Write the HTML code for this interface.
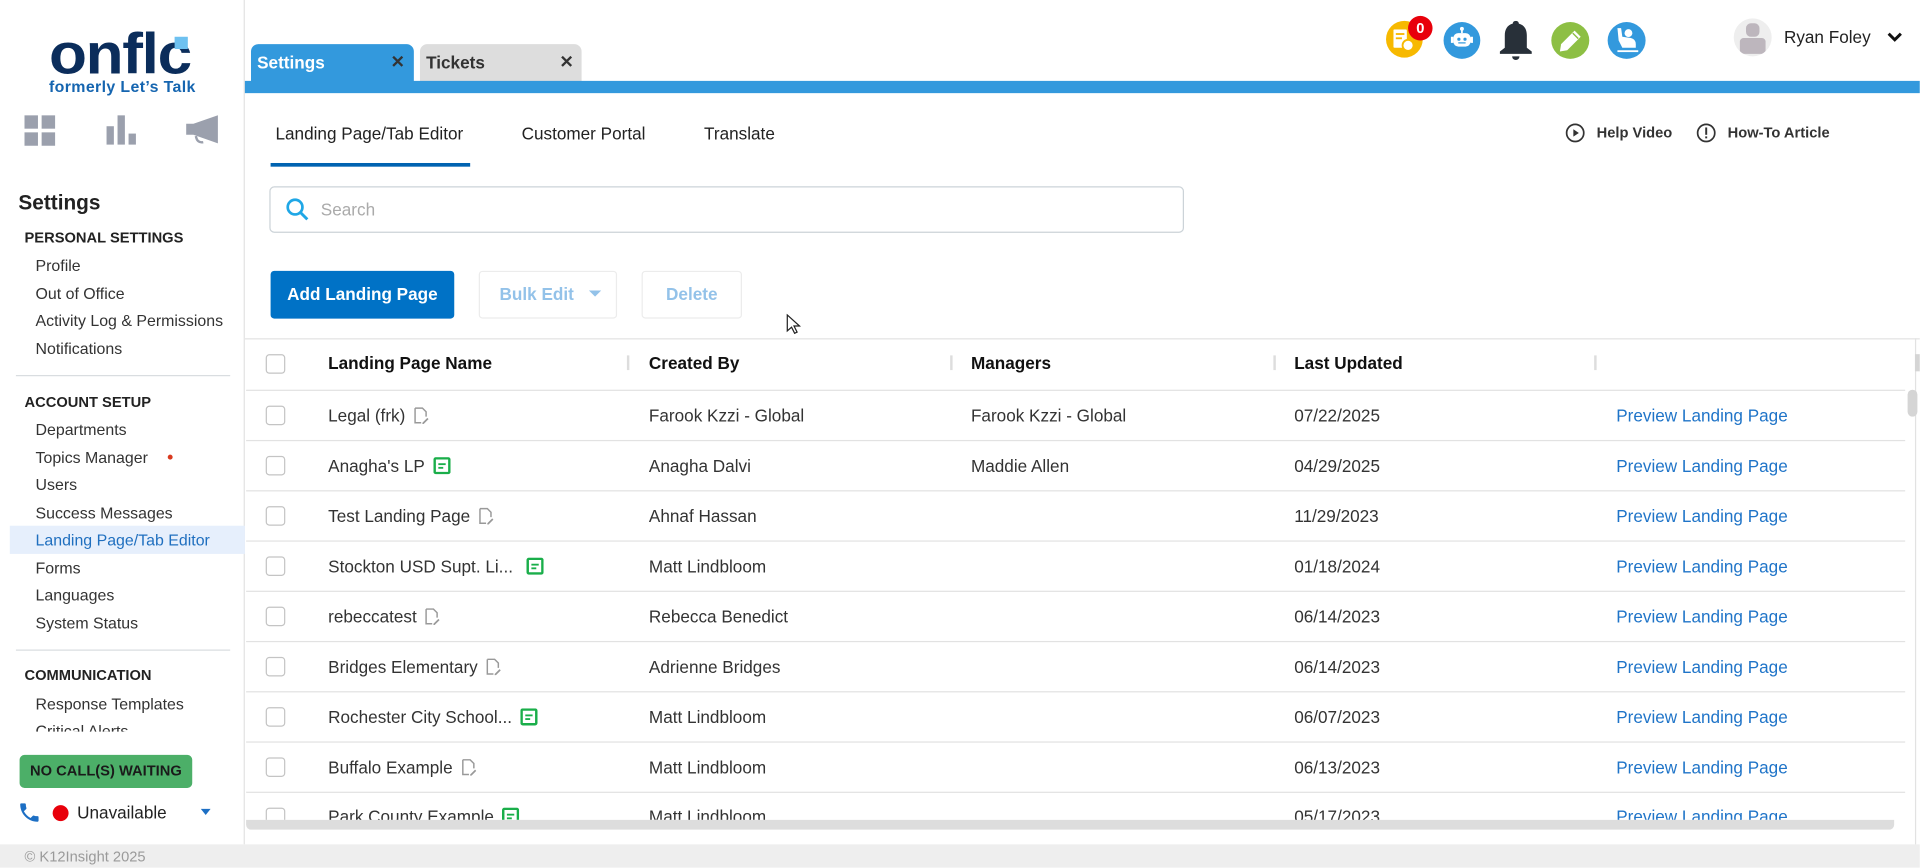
<!DOCTYPE html>
<html><head><meta charset="utf-8">
<style>
*{box-sizing:border-box;margin:0;padding:0}
html,body{width:1920px;height:868px;overflow:hidden;background:#fff}
#w{position:absolute;left:0;top:0;width:1568px;height:708px;overflow:hidden;transform:scale(1.2244,1.2255);transform-origin:0 0;font-family:"Liberation Sans",Arial,sans-serif;color:#2b2b2b}
.a{position:absolute}
.side{left:0;top:0;width:200px;height:689px;border-right:1px solid #e3e3e3;background:#fff}
.it{position:absolute;left:29px;font-size:13px;color:#333;white-space:nowrap}
.hd{position:absolute;left:20px;font-size:12px;font-weight:bold;color:#222}
.hr{position:absolute;left:13px;width:175px;height:1px;background:#d9dde0}
.cb{position:absolute;left:217px;width:16px;height:16px;border:1px solid #c4c4c4;border-radius:3px;background:#fff}
.th{position:absolute;font-size:14px;font-weight:bold;color:#111;top:288px}
.sep{position:absolute;top:290px;width:2px;height:12px;background:#ddd}
.row{position:absolute;left:201px;width:1355px;height:1px;background:#e2e2e2}
.td{position:absolute;font-size:14px;color:#333;white-space:nowrap}
.pv{position:absolute;left:1320px;font-size:14px;color:#1f74c8;white-space:nowrap}
.ic{display:inline-block;vertical-align:-2px;margin-left:7px}
</style></head><body><div id="w">

<!-- sidebar -->
<div class="a side">
  <div class="a" style="left:40px;top:19px;font-size:47px;font-weight:bold;color:#0b2d5b;letter-spacing:-1px;line-height:50px;transform:scaleX(1.08);transform-origin:0 0">onfl<span style="position:relative">c<span style="position:absolute;right:2px;top:13px;width:10px;height:10px;background:#6ec1f0"></span></span></div>
  <div class="a" style="left:40px;top:63px;font-size:13px;font-weight:bold;color:#1565b0;white-space:nowrap;letter-spacing:0.3px">formerly Let’s Talk</div>
  <svg class="a" style="left:20px;top:94px" width="26" height="25"><g fill="#9ba0ad"><rect x="0" y="0" width="11" height="11"/><rect x="14" y="0" width="11" height="11"/><rect x="0" y="14" width="11" height="11"/><rect x="14" y="14" width="11" height="11"/></g></svg>
  <svg class="a" style="left:87px;top:94px" width="25" height="25"><g fill="#9ba0ad"><rect x="0" y="9" width="6" height="15"/><rect x="9" y="0" width="6" height="24"/><rect x="18" y="15" width="6" height="9"/></g></svg>
  <svg class="a" style="left:152px;top:93px" width="26" height="27"><path fill="#9ba0ad" d="M0 8h6L26 1v23L6 17H0z"/><path d="M8 18q1 6 6 5" stroke="#9ba0ad" stroke-width="2" fill="none"/></svg>

  <div class="a" style="left:15px;top:156px;font-size:17px;font-weight:bold;color:#222">Settings</div>
  <div class="hd" style="top:187px">PERSONAL SETTINGS</div>
  <div class="it" style="top:209px">Profile</div>
  <div class="it" style="top:232px">Out of Office</div>
  <div class="it" style="top:254px">Activity Log &amp; Permissions</div>
  <div class="it" style="top:277px">Notifications</div>
  <div class="hr" style="top:306px"></div>
  <div class="hd" style="top:321px">ACCOUNT SETUP</div>
  <div class="it" style="top:343px">Departments</div>
  <div class="it" style="top:366px">Topics Manager <span style="display:inline-block;width:4px;height:4px;border-radius:50%;background:#d93a1f;margin-left:13px;vertical-align:3px"></span></div>
  <div class="it" style="top:388px">Users</div>
  <div class="it" style="top:411px">Success Messages</div>
  <div class="a" style="left:8px;top:429px;width:192px;height:23px;background:#e6effc"></div>
  <div class="it" style="top:433px;color:#1f6fbf">Landing Page/Tab Editor</div>
  <div class="it" style="top:456px">Forms</div>
  <div class="it" style="top:478px">Languages</div>
  <div class="it" style="top:501px">System Status</div>
  <div class="hr" style="top:530px"></div>
  <div class="hd" style="top:544px">COMMUNICATION</div>
  <div class="it" style="top:567px">Response Templates</div>
  <div class="a" style="left:0;top:586px;width:199px;height:11px;overflow:hidden"><div class="it" style="top:3px">Critical Alerts</div></div>
  <div class="a" style="left:16px;top:616px;width:141px;height:27px;background:#4caf68;border-radius:4px;font-size:12px;font-weight:bold;color:#1a1a1a;text-align:center;line-height:27px">NO CALL(S) WAITING</div>
  <svg class="a" style="left:14px;top:653px" width="20" height="20" viewBox="0 0 24 24"><path fill="#1d6fc4" d="M6.6 10.8c1.4 2.8 3.8 5.1 6.6 6.6l2.2-2.2c.3-.3.7-.4 1-.2 1.1.4 2.3.6 3.6.6.6 0 1 .4 1 1V20c0 .6-.4 1-1 1C10.6 21 3 13.4 3 4c0-.6.4-1 1-1h3.5c.6 0 1 .4 1 1 0 1.3.2 2.5.6 3.6.1.3 0 .7-.2 1z"/></svg>
  <div class="a" style="left:43px;top:657px;width:13px;height:13px;border-radius:50%;background:#e8000b"></div>
  <div class="a" style="left:63px;top:655px;font-size:14px;color:#222">Unavailable</div>
  <div class="a" style="left:164px;top:660px;width:0;height:0;border-left:4px solid transparent;border-right:4px solid transparent;border-top:5px solid #1d6fc4"></div>
</div>

<!-- footer -->
<div class="a" style="left:0;top:689px;width:1568px;height:20px;background:#eeeeee"></div>
<div class="a" style="left:20px;top:692px;font-size:12px;color:#9a9a9a">© K12Insight 2025</div>

<!-- tabs -->
<div class="a" style="left:205px;top:36px;width:133px;height:31px;background:#3399dd;border-radius:6px 6px 0 0"></div>
<div class="a" style="left:210px;top:43px;font-size:14px;font-weight:bold;color:#fff">Settings</div>
<div class="a" style="left:319px;top:42px;font-size:14px;font-weight:bold;color:#333">✕</div>
<div class="a" style="left:343px;top:36px;width:132px;height:31px;background:#dddddd;border-radius:6px 6px 0 0"></div>
<div class="a" style="left:348px;top:43px;font-size:14px;font-weight:bold;color:#333">Tickets</div>
<div class="a" style="left:457px;top:42px;font-size:14px;font-weight:bold;color:#333">✕</div>
<div class="a" style="left:200px;top:66px;width:1368px;height:10px;background:#3399dd"></div>

<!-- top right icons -->
<div class="a" style="left:1132px;top:17px;width:30px;height:30px;border-radius:50%;background:#f7b900"></div>
<svg class="a" style="left:1138px;top:24px" width="18" height="18"><g fill="#fff"><rect x="0" y="0" width="11" height="15" rx="1"/></g><g fill="#f7b900"><rect x="2" y="3" width="7" height="1.5"/><rect x="2" y="6.5" width="5" height="1.5"/></g><circle cx="12" cy="13" r="4.5" fill="#fff" stroke="#f7b900" stroke-width="1.5"/></svg>
<div class="a" style="left:1150px;top:13px;width:20px;height:20px;border-radius:50%;background:#e8000b;color:#fff;font-size:12px;font-weight:bold;text-align:center;line-height:20px">0</div>
<div class="a" style="left:1179px;top:18px;width:30px;height:30px;border-radius:50%;background:#3399dd"></div>
<svg class="a" style="left:1184px;top:21px" width="20" height="24"><g fill="#fff"><circle cx="10" cy="2.5" r="1.6"/><rect x="9.3" y="3" width="1.4" height="3"/><rect x="3" y="6" width="14" height="11" rx="4"/><rect x="1" y="9" width="2" height="5"/><rect x="17" y="9" width="2" height="5"/></g><g fill="#3399dd"><circle cx="7.5" cy="11" r="1.3"/><circle cx="12.5" cy="11" r="1.3"/><rect x="7" y="13.5" width="6" height="1"/></g></svg>
<svg class="a" style="left:1224px;top:17px" width="28" height="33" viewBox="0 0 28 33"><path fill="#283039" d="M14 0c1.5 0 2.5 1 2.5 2.3C21 3.5 23 7 23 12v10l4 3v2H1v-2l4-3V12c0-5 2-8.5 6.5-9.7C11.5 1 12.5 0 14 0z"/><path fill="#283039" d="M11 29h6a3 3 0 0 1-6 0z"/></svg>
<div class="a" style="left:1267px;top:18px;width:31px;height:30px;border-radius:50%;background:#8dbf44"></div>
<svg class="a" style="left:1273px;top:24px" width="19" height="19"><path fill="#fff" d="M13 1l5 5-11 11-6 1 1-6z"/><path d="M11.5 3l4.5 4.5" stroke="#8dbf44" stroke-width="1.2"/></svg>
<div class="a" style="left:1313px;top:18px;width:31px;height:30px;border-radius:50%;background:#3399dd"></div>
<svg class="a" style="left:1318px;top:22px" width="22" height="22"><g fill="#fff"><circle cx="12" cy="5" r="3.2"/><path d="M3 1l3 0 1 7 7 1q4 1 4 5v3H7l-3-6z"/><rect x="3" y="19" width="17" height="1.5"/></g></svg>
<div class="a" style="left:1416px;top:15px;width:31px;height:31px;border-radius:50%;background:#eeeeee;overflow:hidden"><div class="a" style="left:10px;top:4px;width:11px;height:11px;border-radius:4px;background:#bdb6bd"></div><div class="a" style="left:5px;top:16px;width:21px;height:13px;border-radius:3px;background:#bdb6bd"></div></div>
<div class="a" style="left:1457px;top:22px;font-size:14px;color:#222">Ryan Foley</div>
<svg class="a" style="left:1541px;top:26px" width="13" height="9"><path d="M1.5 1.5l5 5 5-5" stroke="#111" stroke-width="2.4" fill="none"/></svg>

<!-- subtabs -->
<div class="a" style="left:225px;top:101px;font-size:14px;color:#222">Landing Page/Tab Editor</div>
<div class="a" style="left:221px;top:133px;width:163px;height:3px;background:#0063b1"></div>
<div class="a" style="left:426px;top:101px;font-size:14px;color:#222">Customer Portal</div>
<div class="a" style="left:575px;top:101px;font-size:14px;color:#222">Translate</div>
<svg class="a" style="left:1278px;top:100px" width="17" height="17"><circle cx="8.5" cy="8.5" r="7" stroke="#333" stroke-width="1.4" fill="none"/><path d="M7 5.5v6l4.5-3z" fill="#333"/></svg>
<div class="a" style="left:1304px;top:101px;font-size:12px;font-weight:bold;color:#333">Help Video</div>
<svg class="a" style="left:1385px;top:100px" width="17" height="17"><circle cx="8.5" cy="8.5" r="7" stroke="#333" stroke-width="1.4" fill="none"/><rect x="7.7" y="4" width="1.6" height="6" fill="#333"/><rect x="7.7" y="11.3" width="1.6" height="1.6" fill="#333"/></svg>
<div class="a" style="left:1411px;top:101px;font-size:12px;font-weight:bold;color:#333">How-To Article</div>

<!-- search -->
<div class="a" style="left:220px;top:152px;width:747px;height:38px;border:1px solid #ccd3d8;border-radius:4px"></div>
<svg class="a" style="left:233px;top:161px" width="20" height="20"><circle cx="8" cy="8" r="6" stroke="#1fa7e6" stroke-width="2.2" fill="none"/><path d="M12.5 12.5l5.5 5.5" stroke="#1fa7e6" stroke-width="2.4"/></svg>
<div class="a" style="left:262px;top:163px;font-size:14px;color:#aaa">Search</div>

<!-- buttons -->
<div class="a" style="left:221px;top:221px;width:150px;height:39px;background:#0072c6;border-radius:3px;color:#fff;font-size:14px;font-weight:bold;text-align:center;line-height:39px">Add Landing Page</div>
<div class="a" style="left:391px;top:221px;width:113px;height:39px;border:1px solid #ececec;border-radius:3px;color:#93c2e9;font-size:14px;font-weight:bold;line-height:37px;padding-left:16px">Bulk Edit <span style="display:inline-block;margin-left:8px;vertical-align:3px;border-left:5px solid transparent;border-right:5px solid transparent;border-top:5px solid #93c2e9"></span></div>
<div class="a" style="left:524px;top:221px;width:82px;height:39px;border:1px solid #ececec;border-radius:3px;color:#93c2e9;font-size:14px;font-weight:bold;text-align:center;line-height:37px">Delete</div>
<svg class="a" style="left:642px;top:256px" width="12" height="18"><path d="M1 1v13l3.5-3 2.5 5 2-1-2.5-5H11z" fill="#fff" stroke="#222" stroke-width="1"/></svg>

<!-- table -->
<div class="a" style="left:200px;top:276px;width:1368px;height:1px;background:#e2e2e2"></div>
<div class="cb" style="top:289px"></div>
<div class="th" style="left:268px">Landing Page Name</div>
<div class="th" style="left:530px">Created By</div>
<div class="th" style="left:793px">Managers</div>
<div class="th" style="left:1057px">Last Updated</div>
<div class="sep" style="left:512px"></div><div class="sep" style="left:776px"></div><div class="sep" style="left:1040px"></div><div class="sep" style="left:1302px"></div>
<div class="row" style="top:318px"></div>

<div style="position:absolute;left:0;top:319px;width:1568px;height:350px;overflow:hidden">
<div style="position:absolute;left:0;top:-319px;width:1568px;height:700px">
<div class="cb" style="top:331px"></div><div class="td" style="left:268px;top:331px">Legal (frk)<svg class="ic" width="12" height="14"><path d="M1 1h6l3 3v4M1 1v12h5" stroke="#999" fill="none" stroke-width="1.2"/><path d="M7 13l4-4 1 1-4 4H7z" fill="#999"/></svg></div><div class="td" style="left:530px;top:331px">Farook Kzzi - Global</div><div class="td" style="left:793px;top:331px">Farook Kzzi - Global</div><div class="td" style="left:1057px;top:331px">07/22/2025</div><div class="pv" style="top:331px">Preview Landing Page</div>
<div class="row" style="top:359px"></div>
<div class="cb" style="top:372px"></div><div class="td" style="left:268px;top:372px">Anagha's LP<svg class="ic" width="14" height="14"><rect x="1" y="1" width="12" height="12" rx="1" stroke="#1aae4a" stroke-width="2" fill="none"/><rect x="4" y="5" width="6" height="1.5" fill="#1aae4a"/><rect x="4" y="8" width="4" height="1.5" fill="#1aae4a"/></svg></div><div class="td" style="left:530px;top:372px">Anagha Dalvi</div><div class="td" style="left:793px;top:372px">Maddie Allen</div><div class="td" style="left:1057px;top:372px">04/29/2025</div><div class="pv" style="top:372px">Preview Landing Page</div>
<div class="row" style="top:400px"></div>
<div class="cb" style="top:413px"></div><div class="td" style="left:268px;top:413px">Test Landing Page<svg class="ic" width="12" height="14"><path d="M1 1h6l3 3v4M1 1v12h5" stroke="#999" fill="none" stroke-width="1.2"/><path d="M7 13l4-4 1 1-4 4H7z" fill="#999"/></svg></div><div class="td" style="left:530px;top:413px">Ahnaf Hassan</div><div class="td" style="left:1057px;top:413px">11/29/2023</div><div class="pv" style="top:413px">Preview Landing Page</div>
<div class="row" style="top:441px"></div>
<div class="cb" style="top:454px"></div><div class="td" style="left:268px;top:454px">Stockton USD Supt. Li...<svg class="ic" style="margin-left:11px" width="14" height="14"><rect x="1" y="1" width="12" height="12" rx="1" stroke="#1aae4a" stroke-width="2" fill="none"/><rect x="4" y="5" width="6" height="1.5" fill="#1aae4a"/><rect x="4" y="8" width="4" height="1.5" fill="#1aae4a"/></svg></div><div class="td" style="left:530px;top:454px">Matt Lindbloom</div><div class="td" style="left:1057px;top:454px">01/18/2024</div><div class="pv" style="top:454px">Preview Landing Page</div>
<div class="row" style="top:482px"></div>
<div class="cb" style="top:495px"></div><div class="td" style="left:268px;top:495px">rebeccatest<svg class="ic" width="12" height="14"><path d="M1 1h6l3 3v4M1 1v12h5" stroke="#999" fill="none" stroke-width="1.2"/><path d="M7 13l4-4 1 1-4 4H7z" fill="#999"/></svg></div><div class="td" style="left:530px;top:495px">Rebecca Benedict</div><div class="td" style="left:1057px;top:495px">06/14/2023</div><div class="pv" style="top:495px">Preview Landing Page</div>
<div class="row" style="top:523px"></div>
<div class="cb" style="top:536px"></div><div class="td" style="left:268px;top:536px">Bridges Elementary<svg class="ic" width="12" height="14"><path d="M1 1h6l3 3v4M1 1v12h5" stroke="#999" fill="none" stroke-width="1.2"/><path d="M7 13l4-4 1 1-4 4H7z" fill="#999"/></svg></div><div class="td" style="left:530px;top:536px">Adrienne Bridges</div><div class="td" style="left:1057px;top:536px">06/14/2023</div><div class="pv" style="top:536px">Preview Landing Page</div>
<div class="row" style="top:564px"></div>
<div class="cb" style="top:577px"></div><div class="td" style="left:268px;top:577px">Rochester City School...<svg class="ic" width="14" height="14"><rect x="1" y="1" width="12" height="12" rx="1" stroke="#1aae4a" stroke-width="2" fill="none"/><rect x="4" y="5" width="6" height="1.5" fill="#1aae4a"/><rect x="4" y="8" width="4" height="1.5" fill="#1aae4a"/></svg></div><div class="td" style="left:530px;top:577px">Matt Lindbloom</div><div class="td" style="left:1057px;top:577px">06/07/2023</div><div class="pv" style="top:577px">Preview Landing Page</div>
<div class="row" style="top:605px"></div>
<div class="cb" style="top:618px"></div><div class="td" style="left:268px;top:618px">Buffalo Example<svg class="ic" width="12" height="14"><path d="M1 1h6l3 3v4M1 1v12h5" stroke="#999" fill="none" stroke-width="1.2"/><path d="M7 13l4-4 1 1-4 4H7z" fill="#999"/></svg></div><div class="td" style="left:530px;top:618px">Matt Lindbloom</div><div class="td" style="left:1057px;top:618px">06/13/2023</div><div class="pv" style="top:618px">Preview Landing Page</div>
<div class="row" style="top:646px"></div>
<div class="cb" style="top:659px"></div><div class="td" style="left:268px;top:658px">Park County Example<svg class="ic" width="14" height="14"><rect x="1" y="1" width="12" height="12" rx="1" stroke="#1aae4a" stroke-width="2" fill="none"/><rect x="4" y="5" width="6" height="1.5" fill="#1aae4a"/><rect x="4" y="8" width="4" height="1.5" fill="#1aae4a"/></svg></div><div class="td" style="left:530px;top:658px">Matt Lindbloom</div><div class="td" style="left:1057px;top:658px">05/17/2023</div><div class="pv" style="top:658px">Preview Landing Page</div>
</div></div>

<!-- scrollbars -->
<div class="a" style="left:201px;top:669px;width:1346px;height:8px;background:#dddddd;border-radius:0 0 4px 4px"></div>
<div class="a" style="left:1564px;top:276px;width:1px;height:413px;background:#e2e2e2"></div>
<div class="a" style="left:1558px;top:318px;width:8px;height:22px;background:#d5d5d5;border-radius:4px"></div>
<div class="a" style="left:1564px;top:289px;width:4px;height:14px;background:#d5d5d5"></div>

</div></body></html>
